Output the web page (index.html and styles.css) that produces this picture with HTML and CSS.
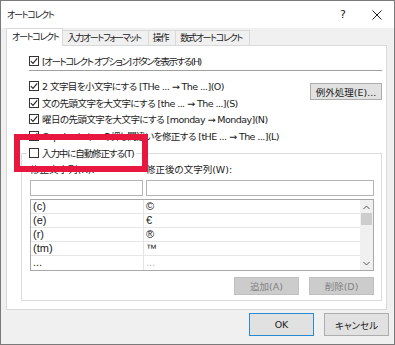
FILE: index.html
```html
<!DOCTYPE html>
<html lang="ja">
<head>
  <meta charset="UTF-8" />
  <title>オートコレクト</title>
  <link rel="stylesheet" href="styles.css">
</head>
<body>
  <div class="dialog">
    <div class="titlebar">
      <span class="title">オートコレクト</span>
      <span class="help">?</span>
      <span class="close">
        <svg width="10" height="10" viewBox="0 0 10 10"><path d="M0.5 0.5 L9.5 9.5 M9.5 0.5 L0.5 9.5" stroke="#222" stroke-width="1" fill="none"/></svg>
      </span>
    </div>

    <div class="content">
      <div class="tabs">
        <div class="tab active">オートコレクト</div>
        <div class="tab">入力オートフォーマット</div>
        <div class="tab">操作</div>
        <div class="tab">数式オートコレクト</div>
      </div>

      <div class="panel">
        <label class="check tight"><span class="box checked"></span>[オートコレクト オプション] ボタンを表示する(H)</label>
        <div class="sep"></div>

        <div class="options">
          <div class="option-list">
            <label class="check"><span class="box checked"></span>2 文字目を小文字にする [THe ... → The ...](O)</label>
            <label class="check"><span class="box checked"></span>文の先頭文字を大文字にする [the ... → The ...](S)</label>
            <label class="check"><span class="box checked"></span>曜日の先頭文字を大文字にする [monday → Monday](N)</label>
            <label class="check"><span class="box checked"></span>CapsLock キーの押し間違いを修正する [tHE ... → The ...](L)</label>
          </div>
          <button class="btn exceptions">例外処理(E)...</button>
        </div>

        <fieldset class="group">
          <legend><label class="check"><span class="box"></span>入力中に自動修正する(T)</label></legend>
          <div class="cols labels">
            <span>修正文字列(R):</span>
            <span>修正後の文字列(W):</span>
          </div>
          <div class="cols inputs">
            <div class="field"></div>
            <div class="field"></div>
          </div>
          <div class="list">
            <div class="rows">
              <div class="row"><span>(c)</span><span>©</span></div>
              <div class="row"><span>(e)</span><span>€</span></div>
              <div class="row"><span>(r)</span><span>®</span></div>
              <div class="row"><span>(tm)</span><span>™</span></div>
              <div class="row last"><span>...</span><span class="faint">...</span></div>
            </div>
            <div class="scrollbar">
              <svg width="7" height="5" viewBox="0 0 7 5"><path d="M0.5 4 L3.5 1 L6.5 4" stroke="#555" fill="none"/></svg>
              <div class="thumb"></div>
              <div class="track"></div>
              <svg width="7" height="5" viewBox="0 0 7 5"><path d="M0.5 1 L3.5 4 L6.5 1" stroke="#555" fill="none"/></svg>
            </div>
          </div>
          <div class="group-buttons">
            <button class="btn disabled">追加(A)</button>
            <button class="btn disabled">削除(D)</button>
          </div>
        </fieldset>
      </div>

      <div class="footer">
        <button class="btn ok">OK</button>
        <button class="btn">キャンセル</button>
      </div>
    </div>

    <div class="highlight"></div>
  </div>
</body>
</html>
```

FILE: styles.css
```css
* {
  box-sizing: border-box;
}

body {
  margin: 0;
  font-family: "DejaVu Sans", "Noto Sans CJK JP", sans-serif;
  font-size: 9.5px;
  font-feature-settings: "palt";
  color: #1a1a1a;
  background: #fff;
}

.dialog {
  position: relative;
  width: 395px;
  height: 345px;
  border: 1px solid #7a7a7a;
  background: #f0f0f0;
  display: flex;
  flex-direction: column;
}

.titlebar {
  height: 27px;
  flex: none;
  background: #fff;
  display: flex;
  align-items: center;
  padding: 0 2px 0 6px;
}

.title {
  flex: 1;
  font-size: 9px;
  letter-spacing: -1.3px;
}

.help {
  width: 30px;
  text-align: center;
  font-size: 11px;
  margin-right: 4px;
}

.close {
  width: 30px;
  display: flex;
  justify-content: center;
}

.content {
  padding: 0 5px;
}

.tabs {
  display: flex;
  align-items: flex-end;
  height: 17px;
  padding-left: 1px;
}

.tab {
  height: 15px;
  line-height: 14px;
  padding: 0 7px 0 4px;
  border: 1px solid #d9d9d9;
  border-bottom: none;
  margin-left: -1px;
  background: #f0f0f0;
  font-size: 9px;
  letter-spacing: -1.3px;
}

.tab.active {
  position: relative;
  z-index: 1;
  height: 18px;
  line-height: 16px;
  margin-bottom: -1px;
  padding: 0 4px 0 5px;
  background: #fff;
}

.panel {
  height: 265px;
  margin-right: 2px;
  background: #fff;
  border: 1px solid #d9d9d9;
  padding: 7px 4px 0 7px;
  overflow: hidden;
}

.check {
  display: flex;
  align-items: center;
  gap: 3px;
  height: 16px;
  padding-left: 15px;
  white-space: nowrap;
}

.check.tight {
  letter-spacing: -1.5px;
}

.option-list .check {
  height: 16.5px;
  letter-spacing: -0.55px;
}

.box {
  width: 10px;
  height: 10px;
  flex: none;
  border: 1px solid #333;
  background: #fff;
}

.box.checked {
  background: #fff url("data:image/svg+xml,%3Csvg xmlns='http://www.w3.org/2000/svg' width='8' height='8'%3E%3Cpath d='M0.8 4.2 L3 6.4 L7.2 1.4' stroke='%23222' stroke-width='1.1' fill='none'/%3E%3C/svg%3E") center / 8px 8px no-repeat;
}

.sep {
  height: 1px;
  margin: 1px 0 0 15px;
  background: #a0a0a0;
}

.options {
  display: flex;
  justify-content: space-between;
  align-items: flex-start;
  margin-top: 7px;
}

.btn {
  font: inherit;
  color: #1a1a1a;
  background: #e1e1e1;
  border: 1px solid #adadad;
  padding: 0;
}

.exceptions {
  width: 72px;
  height: 17px;
  margin-top: 5px;
}

.group {
  margin: 1px 0 0 7px;
  border: 1px solid #dcdcdc;
  padding: 0 7px 5px 8px;
  min-width: 0;
}

.group legend {
  margin-left: -3px;
  padding: 0 2px;
}

.group legend .check {
  padding-left: 0;
  letter-spacing: -1.1px;
}

.cols {
  display: grid;
  grid-template-columns: 113px 1fr;
  gap: 3px;
}

.labels {
  height: 16px;
  line-height: 16px;
  margin-top: 1px;
}

.inputs {
  margin-top: 2px;
}

.field {
  height: 16px;
  border: 1px solid #b4b4b4;
  background: #fff;
}

.list {
  display: flex;
  height: 72px;
  margin-top: 3px;
  border: 1px solid #a8a8a8;
  font-family: "Liberation Sans", sans-serif;
  font-size: 11px;
  font-variant-emoji: text;
}

.rows {
  flex: 1;
}

.row {
  display: grid;
  grid-template-columns: 113px 1fr;
  height: 14px;
  line-height: 13px;
  border-bottom: 1px solid #e6e6e6;
}

.row.last {
  border-bottom: none;
}

.row span {
  padding-left: 2px;
}

.row span:first-child {
  border-right: 1px solid #e3e3e3;
}

.faint {
  color: #b0b0b0;
}

.scrollbar {
  width: 13px;
  background: #f0f0f0;
  display: flex;
  flex-direction: column;
  align-items: center;
  padding: 5px 1px 4px;
}

.thumb {
  width: 11px;
  height: 12px;
  margin-top: 3px;
  background: #cdcdcd;
}

.track {
  flex: 1;
}

.group-buttons {
  display: flex;
  justify-content: flex-end;
  gap: 10px;
  margin-top: 6px;
}

.group-buttons .btn {
  width: 65px;
  height: 18px;
}

.btn.disabled {
  background: #cccccc;
  border-color: #bfbfbf;
  color: #838383;
}

.footer {
  display: flex;
  justify-content: flex-end;
  gap: 10px;
  padding-top: 3px;
}

.footer .btn {
  width: 65px;
  height: 23px;
}

.btn.ok {
  border-color: #2a8ad4;
}

.highlight {
  position: absolute;
  left: 13px;
  top: 133px;
  width: 134px;
  height: 38px;
  border: 6px solid #e8173f;
}
```
